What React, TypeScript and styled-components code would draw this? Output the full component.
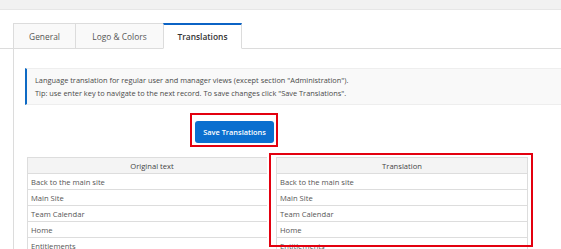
import React from "react";
import styled, { createGlobalStyle } from "styled-components";

const GlobalStyle = createGlobalStyle`
  html, body {
    margin: 0;
    padding: 0;
    background: #fff;
    overflow: hidden;
  }
  body {
    font-family: "Open Sans", "Noto Sans", sans-serif;
    color: #555;
  }
`;

const TopBar = styled.div`
  height: 9px;
  background: #f1f1f1;
  border-bottom: 1px solid #e6e6e6;
`;

const TabList = styled.div`
  display: flex;
  margin-top: 13px;
  padding-left: 13px;
  border-bottom: 1px solid #dcdcdc;
`;

const Tab = styled.div<{ $active?: boolean; $w: number }>`
  box-sizing: border-box;
  width: ${(p) => p.$w}px;
  height: 26px;
  margin-bottom: -1px;
  display: flex;
  align-items: center;
  justify-content: center;
  font-size: 8.4px;
  border-left: 1px solid #dcdcdc;
  border-top: ${(p) => (p.$active ? "2px solid #0b63c5" : "1px solid #dcdcdc")};
  border-bottom: 1px solid ${(p) => (p.$active ? "#fff" : "#dcdcdc")};
  background: ${(p) => (p.$active ? "#fff" : "#f9f9f9")};
  color: ${(p) => (p.$active ? "#333" : "#555")};
  font-weight: ${(p) => (p.$active ? 600 : 400)};
  &:last-child {
    border-right: 1px solid #dcdcdc;
  }
`;

const Panel = styled.div`
  margin-left: 13px;
  border-left: 1px solid #dcdcdc;
  padding: 19px 0 0 11px;
  height: 200px;
`;

const Notice = styled.div`
  box-sizing: border-box;
  height: 37px;
  padding: 5px 8px;
  background: #f9f9f9;
  border: 1px solid #eee;
  border-left: 2px solid #0e6ac4;
  border-right: none;
  font-size: 7.4px;
  line-height: 13px;
  color: #4a4a4a;
`;

const ButtonRow = styled.div`
  margin-top: 13px;
  padding-left: 170px;
  display: flex;
`;

const Marked = styled.div`
  position: relative;
  &::after {
    content: "";
    position: absolute;
    left: -5px;
    top: -5px;
    right: -4px;
    bottom: -4px;
    border: 2px solid #e3000f;
    pointer-events: none;
  }
`;

const SaveButton = styled.button`
  width: 79px;
  height: 22px;
  border: none;
  border-radius: 3px;
  background: #0b6fcf;
  color: #fff;
  font-family: "Open Sans", sans-serif;
  font-size: 7.4px;
  font-weight: 600;
  padding: 0;
`;

const TableWrap = styled.div`
  position: relative;
  margin: 14px 0 0 2px;
  width: 500px;
`;

const Table = styled.table`
  width: 100%;
  border-collapse: collapse;
  table-layout: fixed;
  font-size: 7.6px;
  color: #555;
  th, td {
    border: 1px solid #dddddd;
    height: 15px;
    padding: 0 3px;
    text-align: left;
    white-space: nowrap;
  }
  th {
    background: #f4f4f4;
    text-align: center;
    font-weight: 400;
    color: #444;
  }
`;

const TranslationMark = styled.div`
  position: absolute;
  left: 242px;
  top: -4px;
  width: 264px;
  height: 94px;
  box-sizing: border-box;
  border: 2px solid #e3000f;
  box-shadow: inset 5px 0 0 #fff, -2px 0 0 #fff;
  pointer-events: none;
`;

const rows = ["Back to the main site", "Main Site", "Team Calendar", "Home", "Entitlements"];

export default function App() {
  return (
    <>
      <GlobalStyle />
      <TopBar />
      <TabList>
        <Tab $w={62}>General</Tab>
        <Tab $w={88}>Logo &amp; Colors</Tab>
        <Tab $active $w={79}>Translations</Tab>
      </TabList>
      <Panel>
        <Notice>
          Language translation for regular user and manager views (except section "Administration").
          <br />
          Tip: use enter key to navigate to the next record. To save changes click "Save Translations".
        </Notice>
        <ButtonRow>
          <Marked>
            <SaveButton>Save Translations</SaveButton>
          </Marked>
        </ButtonRow>
        <TableWrap>
          <Table>
            <colgroup>
              <col style={{ width: 249 }} />
              <col style={{ width: 251 }} />
            </colgroup>
            <thead>
              <tr>
                <th>Original text</th>
                <th>Translation</th>
              </tr>
            </thead>
            <tbody>
              {rows.map((r) => (
                <tr key={r}>
                  <td>{r}</td>
                  <td>{r}</td>
                </tr>
              ))}
            </tbody>
          </Table>
          <TranslationMark />
        </TableWrap>
      </Panel>
    </>
  );
}
